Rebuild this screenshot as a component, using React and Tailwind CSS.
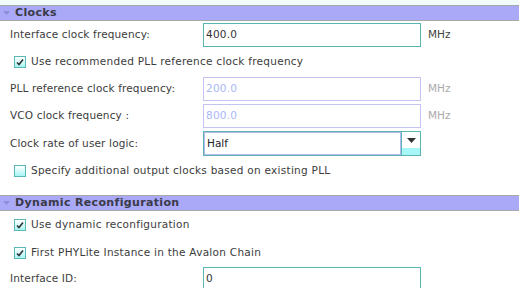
import React from "react";

function Header({ title }) {
  return (
    <div className="flex items-center h-[16px] bg-[#a9a9f7] border-y border-[#a8a8a8] pl-[3px]">
      <svg width="7" height="5" viewBox="0 0 7 5" className="mr-[5px]">
        <path d="M0 0 L7 0 L3.5 4 Z" fill="#8c8cd8" />
      </svg>
      <span className="font-bold text-[11px] text-[#3a3a48] tracking-[0.35px]">{title}</span>
    </div>
  );
}

function Check({ checked, label, className = "" }) {
  return (
    <div className={"flex items-center pl-[14px] " + className}>
      <div className="w-[12px] h-[12px] border border-[#5cb8b4] bg-gradient-to-b from-white to-[#a6f4f4] flex items-center justify-center">
        {checked && (
          <svg width="8" height="8" viewBox="0 0 8 8">
            <path d="M1 4.5 L3 6.5 L7 1.5" stroke="#333" strokeWidth="1.6" fill="none" />
          </svg>
        )}
      </div>
      <span className="ml-[5px] text-[10.5px] text-[#3c3c3c] tracking-[0.27px]">{label}</span>
    </div>
  );
}

function Field({ label, value, unit, disabled, className = "" }) {
  return (
    <div className={"flex items-center h-[24px] " + className}>
      <div className="w-[203px] pl-[10px] text-[10.5px] text-[#3c3c3c] tracking-[0.15px]">{label}</div>
      <div
        className={
          "w-[218px] h-[24px] flex items-center pl-[2px] text-[10.5px] border tracking-[0.2px] " +
          (disabled ? "border-[#c4c4f4] text-[#a8b8f8]" : "border-[#5cb4b0] text-[#333]")
        }
      >
        {value}
      </div>
      {unit && (
        <span className={"ml-[7px] text-[10.5px] " + (disabled ? "text-[#aaa]" : "text-[#444]")}>{unit}</span>
      )}
    </div>
  );
}

export default function App() {
  return (
    <div className="w-[519px] h-[288px] bg-white overflow-hidden font-['DejaVu_Sans',sans-serif]">
      <div className="h-[5px] bg-[#f2fcfc]" />
      <Header title="Clocks" />
      <Field label="Interface clock frequency:" value="400.0" unit="MHz" className="mt-[2px]" />
      <Check checked label="Use recommended PLL reference clock frequency" className="h-[30px]" />
      <Field label="PLL reference clock frequency:" value="200.0" unit="MHz" disabled />
      <Field label="VCO clock frequency :" value="800.0" unit="MHz" disabled className="mt-[3px]" />
      <div className="flex items-center h-[25px] mt-[3px]">
        <div className="w-[203px] pl-[10px] text-[10.5px] text-[#3c3c3c] tracking-[0.15px]">Clock rate of user logic:</div>
        <div className="w-[218px] h-[25px] flex border border-[#5cb4b0]">
          <div className="flex-1 flex items-center pl-[2px] text-[10.5px] text-[#222] border border-[#b8b8f0]">Half</div>
          <div className="w-[19px] flex flex-col border-l border-[#5cb4b0]">
            <div className="flex-1 bg-white flex items-center justify-center">
              <svg width="9" height="5" viewBox="0 0 9 5">
                <path d="M0 0 L9 0 L4.5 5 Z" fill="#333" />
              </svg>
            </div>
            <div className="h-[7px] bg-[#a8f6f8]" />
          </div>
        </div>
      </div>
      <Check label="Specify additional output clocks based on existing PLL" className="h-[30px]" />
      <div className="h-[9px]" />
      <Header title="Dynamic Reconfiguration" />
      <Check checked label="Use dynamic reconfiguration" className="h-[28px]" />
      <Check checked label="First PHYLite Instance in the Avalon Chain" className="h-[28px]" />
      <Field label="Interface ID:" value="0" />
    </div>
  );
}
